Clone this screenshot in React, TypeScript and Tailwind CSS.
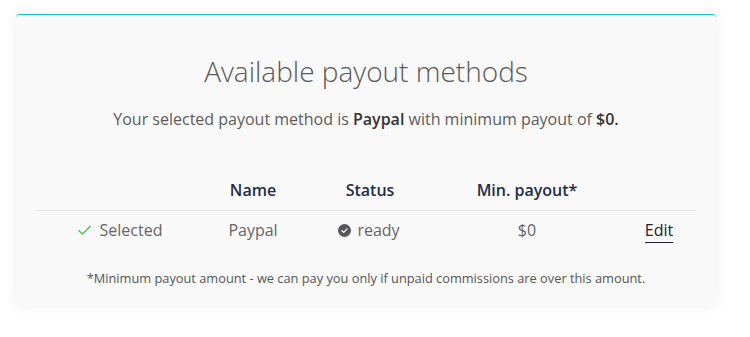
import { Check } from "lucide-react";

const font = { fontFamily: '"Open Sans", "Noto Sans", sans-serif' };

function ReadyDot() {
  return (
    <svg width="13" height="13" viewBox="0 0 14 14" className="shrink-0">
      <circle cx="7" cy="7" r="7" fill="#58585a" />
      <path d="M4.2 7.2 L6.2 9 L9.8 5.2" fill="none" stroke="#fff" strokeWidth="1.3" strokeLinecap="round" strokeLinejoin="round" />
    </svg>
  );
}

export default function App() {
  return (
    <div className="w-[750px] h-[337px] bg-white pt-[14px] pl-4" style={font}>
      <div className="w-[700px] h-[292px] bg-[#f9f9f9] border-t border-[#17c1d0] rounded-[4px] shadow-[0_0_14px_rgba(0,0,0,0.07)] flex flex-col items-center">
        <h1 className="mt-[37px] text-[28px] leading-[38px] font-light text-[#5a5a5a]">
          Available payout methods
        </h1>
        <p className="mt-[17px] text-[16px] leading-[24px] text-[#5c5c5c]">
          Your selected payout method is <b className="font-semibold text-[#333]">Paypal</b> with minimum payout of{" "}
          <b className="font-semibold text-[#333]">$0.</b>
        </p>
        <div className="mt-[47px] w-[660px] text-[16px]">
          <div className="grid grid-cols-[168px_98px_136px_178px_80px] border-b border-[#e3e3e3] pb-[8px] leading-[24px] font-semibold text-[#1f2d48]">
            <div />
            <div className="text-center">Name</div>
            <div className="text-center">Status</div>
            <div className="text-center">Min. payout*</div>
            <div />
          </div>
          <div className="grid grid-cols-[168px_98px_136px_178px_80px] h-[38px] items-center text-[#656565]">
            <div className="flex items-center justify-center gap-[7px] pr-[2px]">
              <Check size={17} strokeWidth={1.6} className="text-[#2fc13a]" />
              <span>Selected</span>
            </div>
            <div className="text-center">Paypal</div>
            <div className="flex items-center justify-center gap-[6px] pr-[2px]">
              <ReadyDot />
              <span>ready</span>
            </div>
            <div className="text-center">$0</div>
            <div className="text-center pl-[6px]">
              <a className="text-[#1b2230] border-b-[1.5px] border-[#1b2230] pb-[1px]">Edit</a>
            </div>
          </div>
        </div>
        <p className="mt-[20px] text-[12.8px] leading-[18px] text-[#555]">
          *Minimum payout amount - we can pay you only if unpaid commissions are over this amount.
        </p>
      </div>
    </div>
  );
}
